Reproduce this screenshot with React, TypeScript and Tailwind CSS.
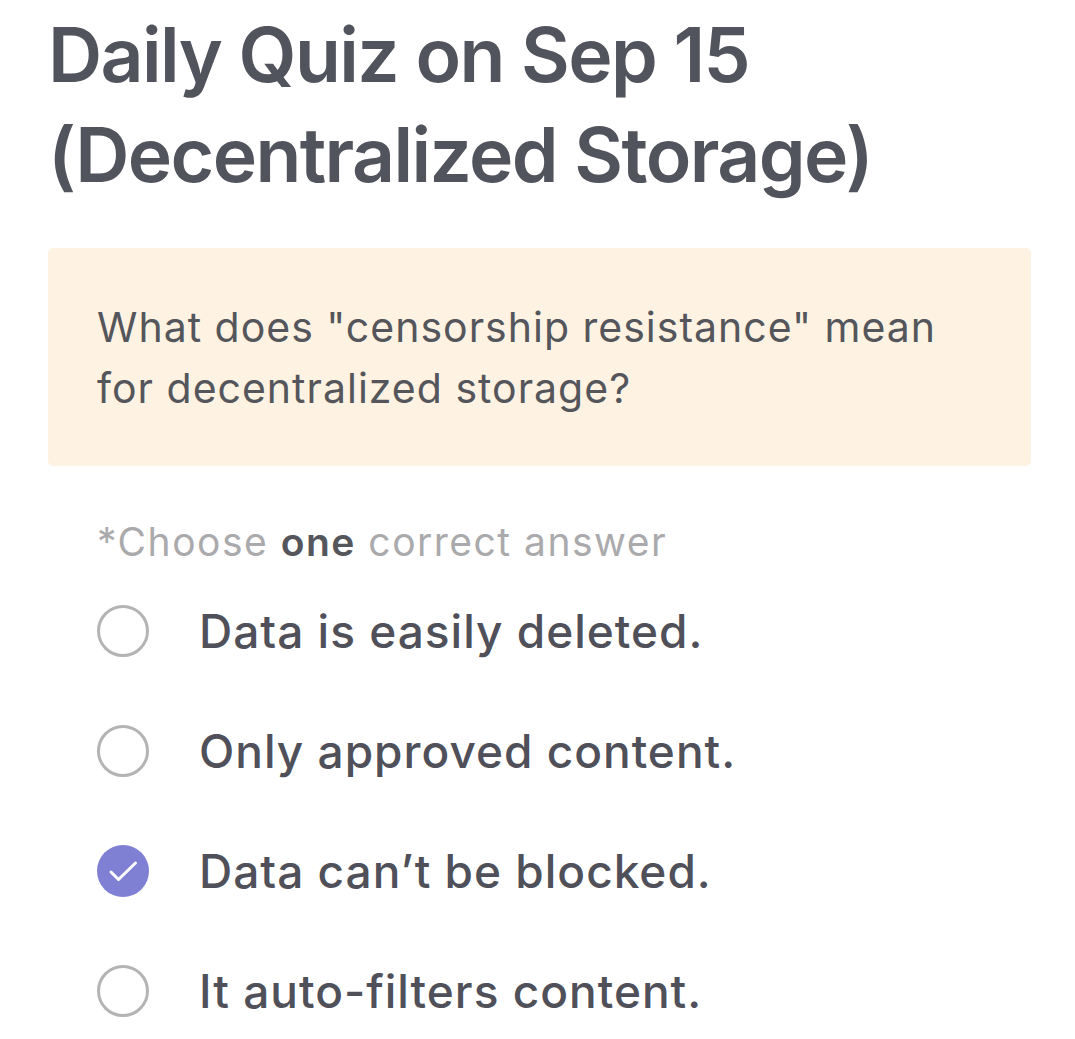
import React from "react";

const options = [
  { label: "Data is easily deleted.", checked: false },
  { label: "Only approved content.", checked: false },
  { label: "Data can\u2019t be blocked.", checked: true },
  { label: "It auto-filters content.", checked: false },
];

const Radio = ({ checked }: { checked: boolean }) => {
  if (checked) {
    return (
      <span className="flex h-[52px] w-[52px] shrink-0 items-center justify-center rounded-full bg-[#7f80d3]">
        <svg width="52" height="52" viewBox="0 0 52 52" fill="none">
          <path
            d="M14 27l7.5 7.5L38.5 18"
            stroke="white"
            strokeWidth="3"
            strokeLinecap="round"
            strokeLinejoin="round"
          />
        </svg>
      </span>
    );
  }
  return (
    <span className="h-[52px] w-[52px] shrink-0 rounded-full border-[3px] border-[#b4b4b6]" />
  );
};

export default function App() {
  return (
    <div
      className="min-h-screen bg-white pl-[48px] pr-[44px] pt-[5px]"
      style={{ fontFamily: "Inter, 'Noto Sans', sans-serif" }}
    >
      <h1 className="text-[75px] font-semibold leading-[100px] tracking-[-1.6px] text-[#52545d]">
        Daily Quiz on Sep 15
        <br />
        (Decentralized Storage)
      </h1>

      <div className="mt-[43px] rounded-[5px] bg-[#fef3e2] px-[49px] pb-[47px] pt-[49px]">
        <p className="text-[41px] leading-[61px] tracking-[1px] text-[#55565c]">
          What does "censorship resistance" mean
          <br />
          for decentralized storage?
        </p>
      </div>

      <p className="mt-[53px] pl-[49px] text-[39px] leading-[45px] tracking-[1.5px] text-[#aaaaad]">
        *Choose <span className="font-semibold text-[#55565c]">one</span> correct answer
      </p>

      <div className="mt-[7px] flex flex-col pl-[49px]">
        {options.map((o) => (
          <div key={o.label} className="flex h-[120px] items-center gap-[50px]">
            <Radio checked={o.checked} />
            <span className="text-[46px] font-medium tracking-[1px] text-[#4f5059]">{o.label}</span>
          </div>
        ))}
      </div>
    </div>
  );
}
